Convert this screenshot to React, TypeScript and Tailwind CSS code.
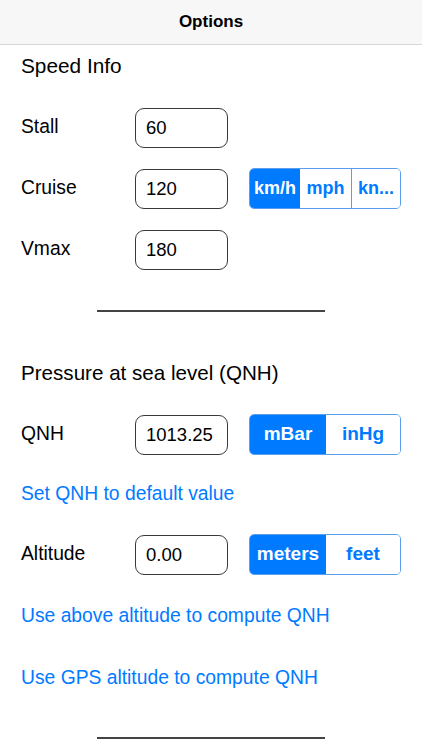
import React from "react";

const font = { fontFamily: '"Liberation Sans", Arial, sans-serif' };

function Input({ value }: { value: string }) {
  return (
    <div className="w-[93px] h-[40px] border border-[#3a3a3a] rounded-[9px] flex items-center pl-[10px] text-[18.5px] text-black">
      {value}
    </div>
  );
}

function Seg({ items, widths, size }: { items: string[]; widths: number[]; size: string }) {
  return (
    <div className="flex h-[41px] border border-[#5a9ef0] rounded-[5px] overflow-hidden">
      {items.map((it, i) => (
        <div
          key={it}
          style={{ width: widths[i] }}
          className={
            "flex items-center justify-center font-bold " +
            size +
            " " +
            (i === 0 ? "bg-[#007aff] text-white" : "bg-white text-[#007aff]") +
            (i > 1 ? " border-l border-[#5a9ef0]" : "")
          }
        >
          {it}
        </div>
      ))}
    </div>
  );
}

function Row({ label, value, seg }: { label: string; value: string; seg?: React.ReactNode }) {
  return (
    <div className="h-[61px] flex items-center px-[21px]">
      <div className="w-[114px] text-[19.3px] text-black">{label}</div>
      <Input value={value} />
      {seg && <div className="ml-[21px]">{seg}</div>}
    </div>
  );
}

export default function App() {
  return (
    <div style={font} className="w-[422px] h-[750px] bg-white overflow-hidden">
      <div className="h-[45px] bg-[#f7f7f7] border-b border-[#d8d8d8] flex items-center justify-center font-bold text-[17px] text-black">
        Options
      </div>
      <div className="h-[42px] flex items-center px-[21px] text-[20.8px] text-black">Speed Info</div>
      <div className="h-[10px]" />
      <Row label="Stall" value="60" />
      <Row
        label="Cruise"
        value="120"
        seg={<Seg items={["km/h", "mph", "kn..."]} widths={[50, 51, 49]} size="text-[18px]" />}
      />
      <Row label="Vmax" value="180" />
      <div className="h-[62px] flex items-center justify-center">
        <div className="w-[228px] h-[1.5px] bg-[#444]" />
      </div>
      <div className="h-[62px] flex items-center px-[21px] text-[20.6px] text-black">Pressure at sea level (QNH)</div>
      <Row
        label="QNH"
        value="1013.25"
        seg={<Seg items={["mBar", "inHg"]} widths={[76, 74]} size="text-[19px]" />}
      />
      <div className="h-[59px] flex items-center px-[21px] text-[19.3px] text-[#007aff]">Set QNH to default value</div>
      <Row
        label="Altitude"
        value="0.00"
        seg={<Seg items={["meters", "feet"]} widths={[76, 74]} size="text-[19px]" />}
      />
      <div className="h-[62px] flex items-center px-[21px] text-[19.3px] text-[#007aff]">Use above altitude to compute QNH</div>
      <div className="h-[62px] flex items-center px-[21px] text-[19.3px] text-[#007aff]">Use GPS altitude to compute QNH</div>
      <div className="h-[58px] flex items-center justify-center">
        <div className="w-[228px] h-[1.5px] bg-[#444]" />
      </div>
    </div>
  );
}
